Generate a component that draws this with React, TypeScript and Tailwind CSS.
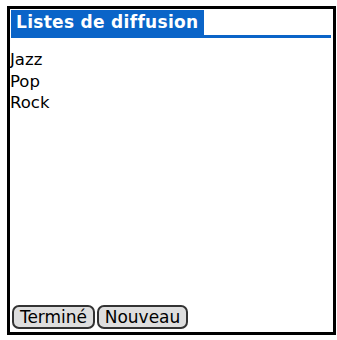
import React from "react";

const items = ["Jazz", "Pop", "Rock"];

export default function App() {
  return (
    <div className="w-[337px] h-[340px] bg-white pt-[6px] pl-[7px]" style={{ fontFamily: '"DejaVu Sans", sans-serif' }}>
      <div className="w-[329px] h-[329px] border-[3px] border-black flex flex-col">
        {/* title bar */}
        <div className="flex flex-col pt-[1px] pl-[1px] pr-[2px]">
          <div className="w-[193px] h-[25px] bg-[#0a64c8] flex items-center pl-[5px]">
            <span className="text-white font-bold text-[17px] leading-none tracking-[0.3px]">
              Listes de diffusion
            </span>
          </div>
          <div className="h-[3px] bg-[#0a64c8]" />
        </div>

        {/* list */}
        <div className="flex flex-col pt-[11px] text-black text-[16.5px] leading-[21.5px]">
          {items.map((it) => (
            <div key={it}>{it}</div>
          ))}
        </div>

        <div className="flex-1" />

        {/* buttons */}
        <div className="flex gap-[2px] pl-[2px] pb-[3px]">
          <button className="h-[24px] w-[83px] bg-[#dedede] border-2 border-[#333] rounded-[7px] text-[17px] leading-none text-black">
            Terminé
          </button>
          <button className="h-[24px] w-[91px] bg-[#dedede] border-2 border-[#333] rounded-[7px] text-[17px] leading-none text-black">
            Nouveau
          </button>
        </div>
      </div>
    </div>
  );
}
